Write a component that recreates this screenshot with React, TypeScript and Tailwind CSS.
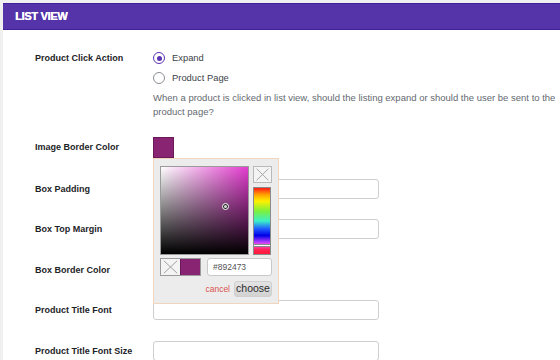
import React from "react";

const font = { fontFamily: '"Liberation Sans", Arial, sans-serif' };

function XBox({ className }: { className: string }) {
  return (
    <div className={`${className} bg-[#f4f4f4] border border-[#b9b9b9] flex items-center justify-center`}>
      <svg width="100%" height="100%" viewBox="0 0 20 18" preserveAspectRatio="none">
        <line x1="3" y1="2" x2="17" y2="16" stroke="#9a9a9a" strokeWidth="1" />
        <line x1="17" y1="2" x2="3" y2="16" stroke="#9a9a9a" strokeWidth="1" />
      </svg>
    </div>
  );
}

function Radio({ checked, label }: { checked: boolean; label: string }) {
  return (
    <div className="h-[20px] flex items-center">
      <span
        className={`w-[12px] h-[12px] rounded-full border flex items-center justify-center bg-white ${
          checked ? "border-[#5b32b4]" : "border-[#8c8f94]"
        }`}
      >
        {checked && <span className="w-[5px] h-[5px] rounded-full bg-[#5b32b4]" />}
      </span>
      <span className="ml-[7px] text-[9.4px] text-[#3c434a]">{label}</span>
    </div>
  );
}

function Input() {
  return <div className="w-[226px] h-[20px] bg-white border border-[#cfcfcf] rounded-[3px]" />;
}

function Picker() {
  return (
    <div className="absolute left-0 top-full z-10 w-[126px] h-[146px] bg-[#ececec] border border-[#f1d6bd] px-[6px] pt-[7px]">
      <div className="flex gap-[4px]">
        <div
          className="relative w-[89px] h-[89px] border border-[#9a9a9a]"
          style={{
            background:
              "linear-gradient(to bottom, rgba(0,0,0,0), #000), linear-gradient(to right, #fff, #e23cce)",
          }}
        >
          <div className="absolute left-[61px] top-[36px] w-[7px] h-[7px] rounded-full border border-white bg-[#222] flex items-center justify-center">
            <div className="w-[3px] h-[3px] rounded-full bg-[#ddd]" />
          </div>
        </div>
        <div className="flex flex-col gap-[4px] w-[19px]">
          <XBox className="w-[19px] h-[17px]" />
          <div
            className="relative w-[18px] h-[68px] border border-[#8a8a8a]"
            style={{
              background:
                "linear-gradient(to bottom, #ff1a1a 0%, #ffa000 10%, #fff000 20%, #7cf03c 35%, #3cf0c8 50%, #1e5aff 62%, #0000e6 72%, #b43cff 82%, #ff50dc 86%, #ff2050 94%, #ff1a3a 100%)",
            }}
          >
            <div className="absolute left-[-1px] right-[-1px] top-[56px] h-[3px] bg-white border border-[#888]" />
          </div>
        </div>
      </div>
      <div className="flex items-center mt-[3px] h-[18px]">
        <div className="flex border border-[#9a9a9a] h-[18px]">
          <XBox className="w-[19px] h-[16px] border-0" />
          <div className="w-[20px] h-[16px] bg-[#892473] border-l border-[#6a1a59]" />
        </div>
        <div className="ml-[6px] w-[65px] h-[18px] bg-white border border-[#c8c8c8] rounded-[3px] flex items-center pl-[5px] text-[8.5px] text-[#555]">
          #892473
        </div>
      </div>
      <div className="flex items-center justify-end mt-[5px]">
        <span className="text-[8.5px] text-[#d9534f] mr-[4px]">cancel</span>
        <div className="w-[38px] h-[16px] rounded-[3px] bg-gradient-to-b from-[#e4e4e4] to-[#d2d2d2] border border-[#cfcfcf] flex items-center justify-center text-[10.5px] text-[#2a2a2a]">
          choose
        </div>
      </div>
    </div>
  );
}

function Label({ text, lh }: { text: string; lh: string }) {
  return <div className={`w-[118px] shrink-0 font-bold text-[9px] text-[#1d2327] ${lh}`}>{text}</div>;
}

export default function App() {
  return (
    <div className="w-[560px] h-[360px] overflow-hidden bg-[#f0f0f1] pl-[3px] pt-[3px]" style={font}>
      <div className="bg-white h-full">
        <div className="h-[27px] bg-[#5533a9] border-y border-[#3f1f9a] flex items-center pl-[12px]">
          <span
            className="text-white font-bold text-[11px] tracking-[-0.3px]"
            style={{ textShadow: "0.4px 0 0 #fff" }}
          >
            LIST VIEW
          </span>
        </div>
        <div className="pl-[32px] pt-[18px]">
          <div className="flex">
            <Label text="Product Click Action" lh="leading-[20px]" />
            <div>
              <Radio checked label="Expand" />
              <Radio checked={false} label="Product Page" />
              <p className="mt-[3px] text-[9.5px] leading-[14px] text-[#646970] whitespace-nowrap">
                When a product is clicked in list view, should the listing expand or should the user be sent to the
                <br />
                product page?
              </p>
            </div>
          </div>
          <div className="flex mt-[18px]">
            <Label text="Image Border Color" lh="leading-[21px]" />
            <div className="relative w-[21px] h-[21px]">
              <div className="w-[21px] h-[21px] bg-[#892473] border border-[#6a1a59]" />
              <Picker />
            </div>
          </div>
          <div className="flex mt-[20.5px]">
            <Label text="Box Padding" lh="leading-[20px]" />
            <Input />
          </div>
          <div className="flex mt-[20.5px]">
            <Label text="Box Top Margin" lh="leading-[20px]" />
            <Input />
          </div>
          <div className="flex mt-[20.5px]">
            <Label text="Box Border Color" lh="leading-[20px]" />
            <div className="w-[21px] h-[20px] bg-[#892473]" />
          </div>
          <div className="flex mt-[20.5px]">
            <Label text="Product Title Font" lh="leading-[20px]" />
            <Input />
          </div>
          <div className="flex mt-[20.5px]">
            <Label text="Product Title Font Size" lh="leading-[20px]" />
            <Input />
          </div>
        </div>
      </div>
    </div>
  );
}
